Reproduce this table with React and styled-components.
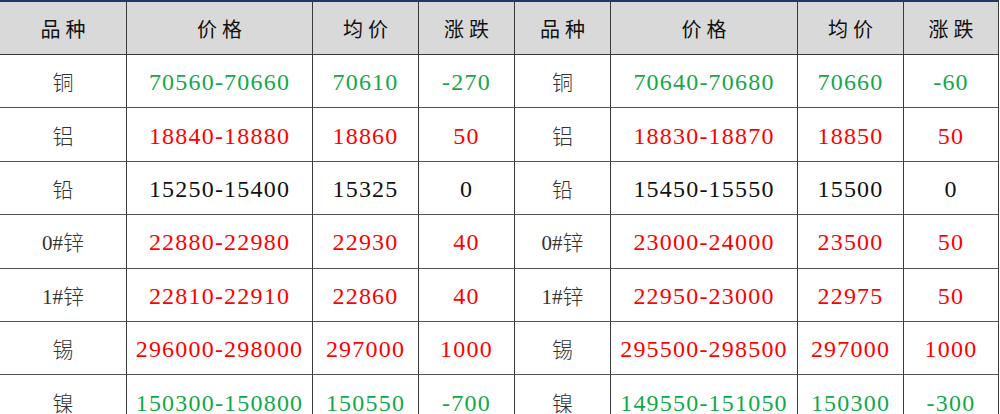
import React from 'react';
import styled, { createGlobalStyle } from 'styled-components';

const GlobalStyle = createGlobalStyle`
  html, body {
    margin: 0;
    padding: 0;
    background: #ffffff;
  }
  body {
    font-family: "Liberation Serif", "Noto Sans CJK SC", serif;
  }
`;

const COLORS = {
  up: '#ff0000',
  down: '#13a84a',
  flat: '#111111',
};

const rows = [
  ['铜', '70560-70660', '70610', '-270', 'down', '铜', '70640-70680', '70660', '-60', 'down'],
  ['铝', '18840-18880', '18860', '50', 'up', '铝', '18830-18870', '18850', '50', 'up'],
  ['铅', '15250-15400', '15325', '0', 'flat', '铅', '15450-15550', '15500', '0', 'flat'],
  ['0#锌', '22880-22980', '22930', '40', 'up', '0#锌', '23000-24000', '23500', '50', 'up'],
  ['1#锌', '22810-22910', '22860', '40', 'up', '1#锌', '22950-23000', '22975', '50', 'up'],
  ['锡', '296000-298000', '297000', '1000', 'up', '锡', '295500-298500', '297000', '1000', 'up'],
  ['镍', '150300-150800', '150550', '-700', 'down', '镍', '149550-151050', '150300', '-300', 'down'],
];

const headers = ['品种', '价格', '均价', '涨跌', '品种', '价格', '均价', '涨跌'];

const Sheet = styled.div`
  display: grid;
  grid-template-columns: 127px 186px 106px 96px 96px 187px 106px 95px;
  grid-template-rows: 53px repeat(7, 53.4px);
  width: 999px;
  border-top: 2px solid #1f3864;
  box-sizing: border-box;
`;

const HeadCell = styled.div`
  display: flex;
  align-items: center;
  justify-content: center;
  box-sizing: border-box;
  background: #d9d9d9;
  border-right: 1px solid #3a3a3a;
  border-bottom: 1px solid #3a3a3a;
  font-family: "Noto Sans CJK SC", sans-serif;
  font-size: 20px;
  font-weight: 400;
  letter-spacing: 5px;
  padding-left: 5px;
  color: #111111;
`;

const Cell = styled.div`
  display: flex;
  align-items: center;
  justify-content: center;
  box-sizing: border-box;
  padding-top: 3px;
  border-right: 1px solid #3a3a3a;
  border-bottom: 1px solid #555555;
  font-family: "Liberation Serif", "DejaVu Serif", serif;
  font-size: 24px;
  letter-spacing: 1.2px;
  color: ${(p) => COLORS[p.$trend] || '#111'};
`;

const NameCell = styled(Cell)`
  padding-top: 0;
  font-family: "Liberation Serif", "Noto Sans CJK SC", serif;
  font-size: 21px;
  font-weight: 300;
  letter-spacing: 0;
  color: #333333;
`;

function Half({ data }) {
  const [name, price, avg, change, trend] = data;
  return (
    <>
      <NameCell>{name}</NameCell>
      <Cell $trend={trend}>{price}</Cell>
      <Cell $trend={trend}>{avg}</Cell>
      <Cell $trend={trend}>{change}</Cell>
    </>
  );
}

export default function App() {
  return (
    <>
      <GlobalStyle />
      <Sheet>
        {headers.map((h, i) => (
          <HeadCell key={i}>{h}</HeadCell>
        ))}
        {rows.map((r, i) => (
          <React.Fragment key={i}>
            <Half data={r.slice(0, 5)} />
            <Half data={r.slice(5, 10)} />
          </React.Fragment>
        ))}
      </Sheet>
    </>
  );
}
